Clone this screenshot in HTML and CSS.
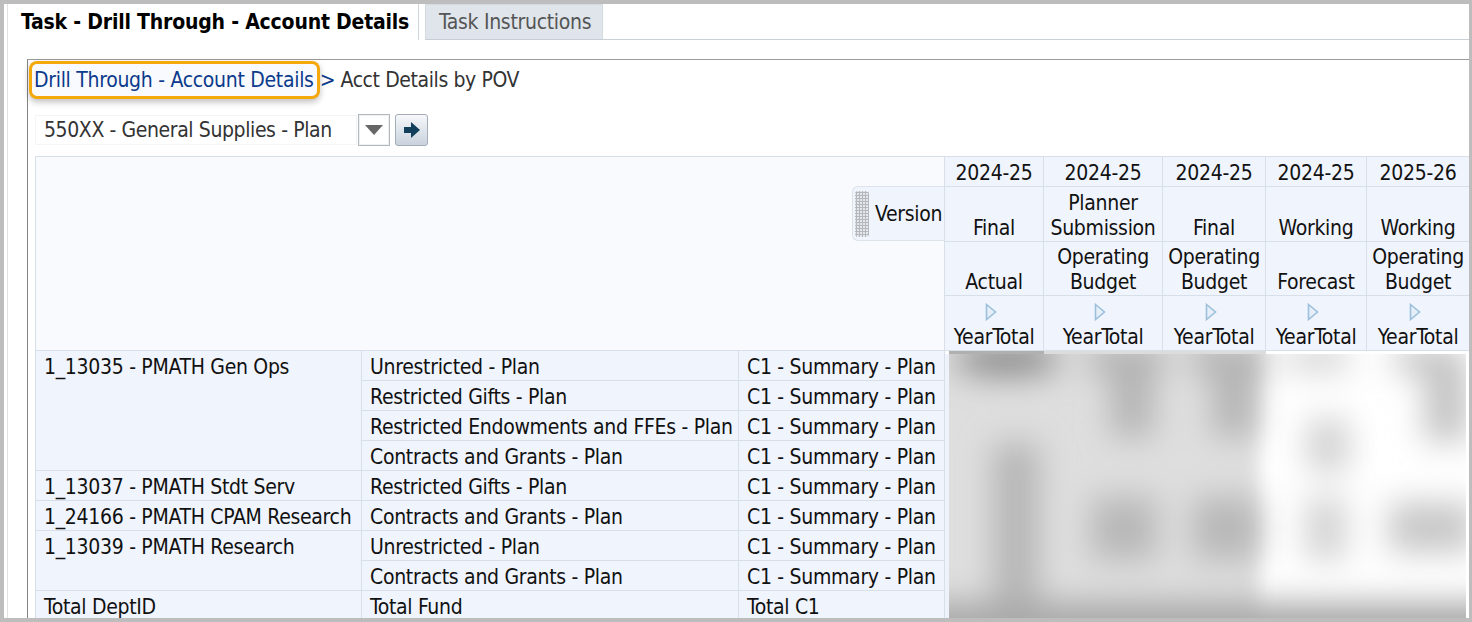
FILE: index.html
```html
<!DOCTYPE html>
<html lang="en">
<head>
<meta charset="utf-8">
<title>Task - Drill Through - Account Details</title>
<link rel="stylesheet" href="styles.css">
</head>
<body>
<div class="frame">
  <div class="inner">
    <nav class="tabs">
      <div class="tab active">Task - Drill Through - Account Details</div>
      <div class="tab idle">Task Instructions</div>
      <div class="tab-rest"></div>
    </nav>
    <section class="panel">
      <div class="crumbs">
        <a class="crumb-link">Drill Through - Account Details</a>
        <span class="crumb-sep">&gt;</span>
        <span class="crumb-here">Acct Details by POV</span>
      </div>
      <div class="pov">
        <div class="pov-value">550XX - General Supplies - Plan</div>
        <button class="btn-drop" aria-label="Open list">
          <svg width="18" height="10" viewBox="0 0 18 10"><polygon points="0,0 18,0 9,10" fill="#666"/></svg>
        </button>
        <button class="btn-go" aria-label="Go">
          <svg width="18" height="18" viewBox="0 0 18 18"><path d="M1 6h7V1l9 8-9 8v-5H1z" fill="#123f5c"/></svg>
        </button>
      </div>
      <table class="grid">
        <colgroup>
          <col class="c1"><col class="c2"><col class="c3">
          <col class="d1"><col class="d2"><col class="d3"><col class="d4"><col class="d5">
        </colgroup>
        <tbody>
          <tr class="h1">
            <td class="corner" colspan="3" rowspan="4">
              <div class="chip"><span class="grip"></span><span>Version</span></div>
            </td>
            <th>2024-25</th><th>2024-25</th><th>2024-25</th><th>2024-25</th><th>2025-26</th>
          </tr>
          <tr class="h2">
            <th>Final</th><th>Planner<br>Submission</th><th>Final</th><th>Working</th><th>Working</th>
          </tr>
          <tr class="h3">
            <th>Actual</th><th>Operating<br>Budget</th><th>Operating<br>Budget</th><th>Forecast</th><th>Operating<br>Budget</th>
          </tr>
          <tr class="h4">
            <th><svg class="tri" viewBox="0 0 12 18"><polygon points="1.5,1.5 10.5,9 1.5,16.5" /></svg><br>YearTotal</th>
            <th><svg class="tri" viewBox="0 0 12 18"><polygon points="1.5,1.5 10.5,9 1.5,16.5" /></svg><br>YearTotal</th>
            <th><svg class="tri" viewBox="0 0 12 18"><polygon points="1.5,1.5 10.5,9 1.5,16.5" /></svg><br>YearTotal</th>
            <th><svg class="tri" viewBox="0 0 12 18"><polygon points="1.5,1.5 10.5,9 1.5,16.5" /></svg><br>YearTotal</th>
            <th><svg class="tri" viewBox="0 0 12 18"><polygon points="1.5,1.5 10.5,9 1.5,16.5" /></svg><br>YearTotal</th>
          </tr>
          <tr>
            <td rowspan="4">1_13035 - PMATH Gen Ops</td><td>Unrestricted - Plan</td><td>C1 - Summary - Plan</td>
            <td class="data" colspan="5" rowspan="9">
              <svg class="smear" viewBox="0 0 517 268" preserveAspectRatio="none">
                <defs>
                  <filter id="b1" x="-40%" y="-40%" width="180%" height="180%"><feGaussianBlur stdDeviation="16"/></filter>
                  <filter id="b2" x="-10%" y="-10%" width="120%" height="120%"><feGaussianBlur stdDeviation="9"/></filter>
                </defs>
                <rect width="517" height="268" fill="#ffffff"/>
                <g filter="url(#b2)"><rect x="-40" y="-30" width="350" height="340" fill="#dedede"/></g>
                <g filter="url(#b1)">
                  <ellipse cx="58" cy="6" rx="54" ry="16" fill="#868686"/>
                  <rect x="140" y="-8" width="75" height="28" fill="#b0b0b0"/>
                  <rect x="243" y="-8" width="75" height="28" fill="#b0b0b0"/>
                  <rect x="162" y="14" width="42" height="70" fill="#b4b4b4"/>
                  <rect x="264" y="14" width="42" height="70" fill="#b4b4b4"/>
                  <rect x="340" y="-6" width="60" height="22" fill="#cccccc"/>
                  <rect x="445" y="-6" width="70" height="24" fill="#bebebe"/>
                  <rect x="475" y="14" width="45" height="75" fill="#c4c4c4"/>
                  <rect x="358" y="65" width="42" height="55" fill="#d2d2d2"/>
                  <rect x="44" y="90" width="46" height="190" fill="#b6b6b6"/>
                  <rect x="142" y="145" width="66" height="64" fill="#b8b8b8"/>
                  <rect x="244" y="145" width="66" height="64" fill="#b8b8b8"/>
                  <rect x="356" y="145" width="42" height="65" fill="#d4d4d4"/>
                  <rect x="440" y="150" width="85" height="52" fill="#c8c8c8"/>
                  <rect x="-30" y="252" width="590" height="50" fill="#a8a8a8"/>
                </g>
              </svg>
            </td>
          </tr>
          <tr><td>Restricted Gifts - Plan</td><td>C1 - Summary - Plan</td></tr>
          <tr><td>Restricted Endowments and FFEs - Plan</td><td>C1 - Summary - Plan</td></tr>
          <tr><td>Contracts and Grants - Plan</td><td>C1 - Summary - Plan</td></tr>
          <tr><td>1_13037 - PMATH Stdt Serv</td><td>Restricted Gifts - Plan</td><td>C1 - Summary - Plan</td></tr>
          <tr><td>1_24166 - PMATH CPAM Research</td><td>Contracts and Grants - Plan</td><td>C1 - Summary - Plan</td></tr>
          <tr><td rowspan="2">1_13039 - PMATH Research</td><td>Unrestricted - Plan</td><td>C1 - Summary - Plan</td></tr>
          <tr><td>Contracts and Grants - Plan</td><td>C1 - Summary - Plan</td></tr>
          <tr><td>Total DeptID</td><td>Total Fund</td><td>Total C1</td></tr>
        </tbody>
      </table>
    </section>
  </div>
</div>
</body>
</html>
```

FILE: styles.css
```css
* { box-sizing: border-box; }
html, body { margin: 0; padding: 0; background: #fff; }
body {
  font-family: "DejaVu Sans Condensed", "DejaVu Sans", sans-serif;
  font-stretch: condensed;
  font-size: 21px;
  letter-spacing: -0.3px;
  color: #1c1c1c;
}
.frame {
  width: 1472px;
  height: 622px;
  border: solid #bdbdbd;
  border-width: 4px 3px 4px 4px;
  overflow: hidden;
  background: #fff;
}
.inner {
  margin-left: 3px;
  height: 100%;
  border-left: 1px solid #e2e2e2;
  overflow: hidden;
}

/* Tabs */
.tabs { display: flex; height: 36px; }
.tab { height: 36px; line-height: 36px; white-space: nowrap; }
.tab.active {
  width: 411px;
  padding-left: 13px;
  font-weight: bold;
  letter-spacing: -0.2px;
  color: #000;
  border-right: 1px solid #cfd6dc;
}
.tab.idle {
  margin-left: 6px;
  width: 178px;
  padding-left: 13px;
  line-height: 35px;
  color: #555;
  background: #dfe5ea;
  border: 1px solid #d4dbe1;
  border-bottom-color: #c6ced5;
}
.tab-rest { flex: 1; border-bottom: 1px solid #c9d0d6; }

/* Panel */
.panel {
  margin: 19px 0 0 19px;
  border-top: 1px solid #9a9a9a;
  border-left: 1px solid #858585;
  padding-left: 7px;
}
.crumbs {
  display: flex;
  align-items: center;
  height: 39px;
  white-space: nowrap;
}
.crumb-link {
  color: #0c3a8c;
  border-radius: 5px;
  line-height: 32px;
  box-shadow: 0 0 0 3px #f5a80c, 0 3px 6px 3px rgba(0, 0, 0, .25);
  margin-left: -3px;
  padding: 0 3px 0 2px;
  background: #f9fafd;
}
.crumb-sep { color: #0c3a8c; margin-left: 3px; letter-spacing: -1px; }
.crumb-here { color: #333; margin-left: 6px; letter-spacing: -0.4px; }

.pov { display: flex; align-items: center; height: 34px; margin-top: 14px; }
.pov-value {
  width: 322px;
  height: 30px;
  line-height: 28px;
  padding-left: 8px;
  color: #333;
  letter-spacing: -0.4px;
  border: 1px solid #f3f5f7;
  white-space: nowrap;
}
.btn-drop {
  width: 32px;
  height: 32px;
  margin-left: 1px;
  padding: 0;
  display: flex;
  align-items: center;
  justify-content: center;
  background: #fff;
  border: 1px solid #b3b8bc;
  box-shadow: inset 0 0 0 1px #eef0f2;
}
.btn-go {
  width: 33px;
  height: 32px;
  margin-left: 5px;
  padding: 0;
  display: flex;
  align-items: center;
  justify-content: center;
  background: linear-gradient(#f6f8fb, #c9d2dd);
  border: 1px solid #a3adb8;
  border-radius: 3px;
}

/* Grid */
.grid {
  border-collapse: collapse;
  table-layout: fixed;
  width: 1434px;
  margin-top: 9px;
  line-height: 25px;
  background: #f0f4fc;
}
.c1 { width: 326px; }
.c2 { width: 377px; }
.c3 { width: 206px; }
.d1 { width: 99px; }
.d2 { width: 119px; }
.d3 { width: 103px; }
.d4 { width: 101px; }
.d5 { width: 103px; }
.grid td, .grid th {
  border: 1px solid #d7dfe9;
  padding: 0 8px;
  white-space: nowrap;
  overflow: hidden;
  height: 30px;
  vertical-align: top;
  text-align: left;
  font-weight: normal;
  color: #111;
}
.grid td { line-height: 26px; padding-top: 3px; }
.grid th {
  text-align: center;
  vertical-align: bottom;
  padding: 0;
  line-height: 25px;
}
.grid tr.h1 { height: 30px; }
.grid tr.h2 { height: 55px; }
.grid tr.h3 { height: 54px; }
.grid tr.h4 { height: 55px; }
.grid td.corner {
  position: relative;
  background: #f8fafe;
  padding: 0;
}
.chip {
  position: absolute;
  top: 29px;
  right: 0;
  width: 92px;
  height: 55px;
  display: flex;
  align-items: center;
  gap: 6px;
  background: #f0f4fc;
  border: 1px solid #dde3ea;
  border-right: 0;
  border-radius: 6px 0 0 6px;
  line-height: 1;
  padding-top: 2px;
}
.grip {
  width: 14px;
  height: 46px;
  margin: -2px 0 0 2px;
  border-radius: 3px;
  background-color: #e4e7eb;
  background-image: radial-gradient(#b4b8bd 1px, transparent 1.2px);
  background-size: 3px 3px;
}
.tri {
  width: 12px;
  height: 18px;
  display: inline-block;
  vertical-align: top;
  margin: 3px 6px 0 0;
}
.tri polygon { fill: #e6eff8; stroke: #9cc0dc; stroke-width: 1.6; }
.grid td.data {
  padding: 3px 0 0 4px;
  border: 0;
  overflow: hidden;
  background:
    linear-gradient(#b0b0b0, #b0b0b0) 4px 0 / 95px 3px no-repeat,
    linear-gradient(#dcdcdc, #dcdcdc) 99px 0 / 222px 3px no-repeat,
    #fff;
  background-color: #fff;
}
.smear { display: block; width: 517px; height: 264px; box-shadow: -4px 0 0 #eef3fb; }
```
